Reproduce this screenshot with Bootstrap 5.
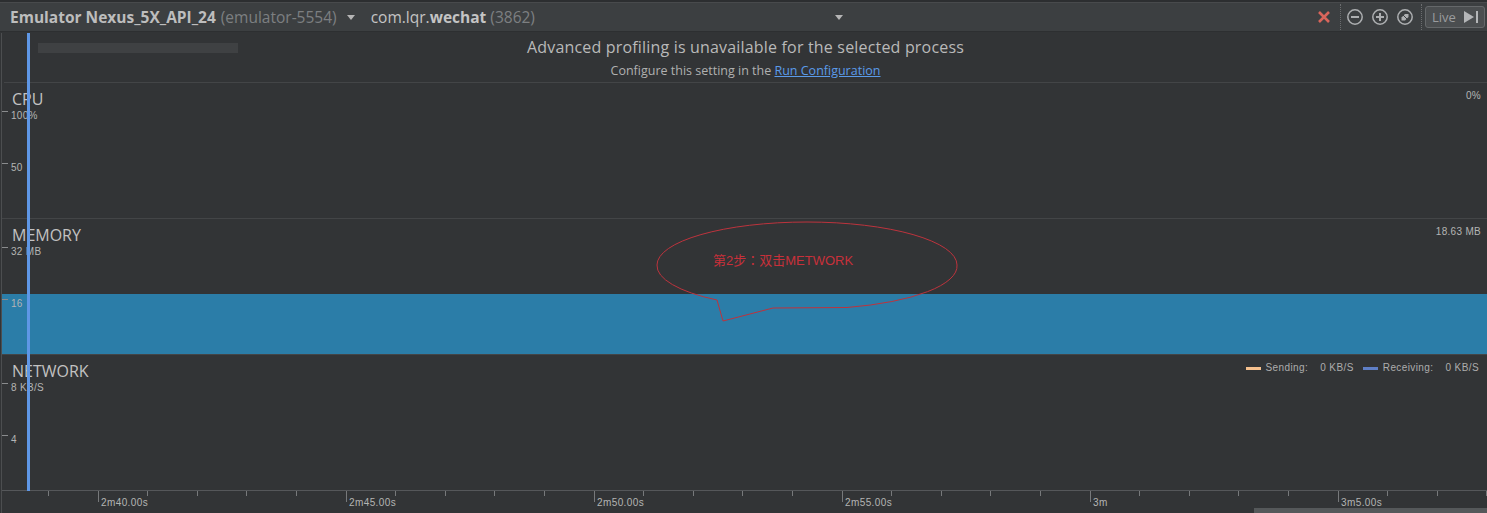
<!DOCTYPE html>
<html lang="en">
<head>
<meta charset="utf-8">
<title>Profiler</title>
<link href="https://cdn.jsdelivr.net/npm/bootstrap@5.3.0/dist/css/bootstrap.min.css" rel="stylesheet">
<style>
html,body{margin:0;height:513px;overflow:hidden;background:#323436;}
body{font-family:"Open Sans","Noto Sans CJK SC",sans-serif;color:#bbb;}
.prof{position:relative;width:1487px;height:513px;overflow:hidden;}
.prof::before{content:"";position:absolute;left:1px;top:33px;bottom:0;width:1px;background:#4c4e50;}
.topline{height:3px;background:#2c2e30;border-bottom:1px solid #484a4c;}
.tbar{height:29px;background:#3c3f41;border-bottom:1px solid #2d2f31;padding-left:10px;font-size:15.5px;color:#c4c4c4;line-height:1;}
.dim{color:#7d7f81;}
.dev{font-weight:700;color:#bdbdbd;margin-top:2px;}
.dimgap{margin-left:5px;margin-top:2px;}
.caret{width:0;height:0;border-left:4.5px solid transparent;border-right:4.5px solid transparent;border-top:5px solid #b5b5b5;}
.caret-a{margin-left:10px;}
.proc{margin-left:16px;margin-top:2px;}
.caret-b{margin-left:300px;}
.sep{width:0;height:26px;border-left:1px dotted #6b6d6f;}
.tools{gap:7px;}
.sep-a{margin-left:2px;margin-right:-2px;}
.sep-b{margin-right:-4px;}
.livebtn{width:60px;height:22px;border:1px solid #65686a;border-radius:3px;background:#4b4e50;color:#9a9c9e;font-size:13px;padding:0 6px;margin-right:2px;}
.notice{height:51px;border-bottom:1px solid #434547;margin-left:4px;position:relative;text-align:center;}
.ghost{position:absolute;left:34px;top:11px;width:200px;height:10px;background:#3f4143;}
.nt1{font-size:16px;line-height:20px;padding-top:5px;color:#b9b9b9;letter-spacing:.18px;height:25px;}
.nt2{font-size:12.5px;line-height:16px;padding-top:6px;color:#b0b0b0;}
.nt2 a{color:#5b9bea;}
.trk{height:136px;border-bottom:1px solid #434547;position:relative;margin-left:2px;}
.trk.last{height:135px;border-bottom:0;}
.ttl{font-size:16px;line-height:20px;padding:6px 0 0 10px;color:#c2c2c2;height:26px;}
.yrow{height:52px;padding:1px 0 0 9px;font:10px/12px "Liberation Sans",sans-serif;letter-spacing:.3px;color:#b4b4b4;position:relative;}
.yrow::before{content:"";position:absolute;left:0;top:2px;width:6px;height:1px;background:#8a8c8e;}
.yrows{position:relative;}
.rv{position:absolute;right:6px;top:7px;font:10px/12px "Liberation Sans",sans-serif;letter-spacing:.3px;color:#b4b4b4;}
.band{position:absolute;left:0;right:0;bottom:0;height:60px;background:#2b7da8;}
.lg{position:absolute;right:8px;top:7px;font:10px/12px "Liberation Sans",sans-serif;letter-spacing:.4px;color:#adadad;gap:5px;white-space:pre;}
.sw{width:15px;height:3px;}
.val{margin-left:7px;}
.sw-b{margin-left:4px;}
.axis{height:23px;margin-left:2px;border-top:1px solid #55575a;position:relative;
 background-image:repeating-linear-gradient(90deg,#77797b 0 1px,transparent 1px 49.6px);background-size:100% 5px;background-repeat:no-repeat;background-position:46px 0;}
.seglist{padding-left:96px;}
.seg{width:248px;flex:none;height:11px;border-left:1px solid #77797b;padding-left:2px;font:10px/24px "Liberation Sans",sans-serif;letter-spacing:.4px;color:#b4b4b4;}
.seg:last-child{flex:1 1 0;width:auto;min-width:0;}
.seg span{display:block;}
.scroll{position:absolute;left:1254px;bottom:0;right:0;height:5px;background:#55585a;}
.playhead{position:absolute;left:27px;top:33px;width:3px;height:458px;background:#5f97e6;}
.callout{position:absolute;left:640px;top:210px;}
.ctext{position:absolute;left:713px;top:253px;font:13px/16px "Liberation Sans","Noto Sans CJK TC",sans-serif;color:#c8303a;}
</style>
</head>
<body>
<div class="prof">
  <div class="topline"></div>
  <div class="tbar d-flex align-items-center">
    <span class="dev">Emulator Nexus_5X_API_24</span>
    <span class="dim dimgap">(emulator-5554)</span>
    <span class="caret caret-a"></span>
    <span class="proc">com.lqr.<b>wechat</b> <span class="dim">(3862)</span></span>
    <span class="caret caret-b"></span>
    <span class="ms-auto d-flex align-items-center tools">
      <svg width="14" height="14" viewBox="0 0 14 14"><path d="M2 2l10 10M12 2L2 12" stroke="#d9655b" stroke-width="2.6"/></svg>
      <span class="sep sep-a"></span>
      <svg width="18" height="18" viewBox="0 0 18 18"><circle cx="9" cy="9" r="7.2" fill="none" stroke="#adafb1" stroke-width="1.5"/><path d="M5 9h8" stroke="#adafb1" stroke-width="2"/></svg>
      <svg width="18" height="18" viewBox="0 0 18 18"><circle cx="9" cy="9" r="7.2" fill="none" stroke="#adafb1" stroke-width="1.5"/><path d="M5 9h8M9 5v8" stroke="#adafb1" stroke-width="2"/></svg>
      <svg width="18" height="18" viewBox="0 0 18 18"><circle cx="9" cy="9" r="7.2" fill="none" stroke="#adafb1" stroke-width="1.5"/><path d="M5.5 9.5L9 6h3.5v3L9 12.5H5.5z" fill="#adafb1"/><path d="M6.5 6.5l5 5" stroke="#3c3f41" stroke-width="1"/></svg>
      <span class="sep sep-b"></span>
      <span class="livebtn d-flex align-items-center justify-content-between">Live
        <svg width="14" height="12" viewBox="0 0 14 12"><path d="M0 0l10 6-10 6z" fill="#b4b6b8"/><path d="M12 0h2v12h-2z" fill="#b4b6b8"/></svg>
      </span>
    </span>
  </div>
  <div class="notice">
    <div class="ghost"></div>
    <div class="nt1">Advanced profiling is unavailable for the selected process</div>
    <div class="nt2">Configure this setting in the <a href="#">Run Configuration</a></div>
  </div>
  <div class="trk">
    <div class="ttl">CPU</div>
    <div class="yrows"><div class="yrow">100%</div><div class="yrow">50</div></div>
    <div class="rv">0%</div>
  </div>
  <div class="trk">
    <div class="band"></div>
    <div class="ttl">MEMORY</div>
    <div class="yrows"><div class="yrow">32 MB</div><div class="yrow">16</div></div>
    <div class="rv">18.63 MB</div>
  </div>
  <div class="trk last">
    <div class="ttl">NETWORK</div>
    <div class="yrows"><div class="yrow">8 KB/S</div><div class="yrow">4</div></div>
    <div class="lg d-flex align-items-center">
      <span class="sw" style="background:#f5c08e"></span><span>Sending:</span><span class="val">0 KB/S</span>
      <span class="sw sw-b" style="background:#5f7fc6"></span><span>Receiving:</span><span class="val">0 KB/S</span>
    </div>
  </div>
  <div class="axis">
    <div class="d-flex seglist">
      <div class="seg"><span>2m40.00s</span></div>
      <div class="seg"><span>2m45.00s</span></div>
      <div class="seg"><span>2m50.00s</span></div>
      <div class="seg"><span>2m55.00s</span></div>
      <div class="seg"><span>3m</span></div>
      <div class="seg"><span>3m5.00s</span></div>
    </div>
  </div>
  <div class="scroll"></div>
  <div class="playhead"></div>
  <svg class="callout" width="340" height="130" viewBox="0 0 340 130"><path d="M167 12A150 43 0 0 1 317 55A150 43 0 0 1 207 97.5L133 98L83 111L77 90A150 43 0 0 1 17 55A150 43 0 0 1 167 12Z" fill="none" stroke="#bd333d" stroke-width="1"/></svg>
  <div class="ctext">第2步：双击METWORK</div>
</div>
<script src="https://cdn.jsdelivr.net/npm/bootstrap@5.3.0/dist/js/bootstrap.bundle.min.js"></script>
</body>
</html>
